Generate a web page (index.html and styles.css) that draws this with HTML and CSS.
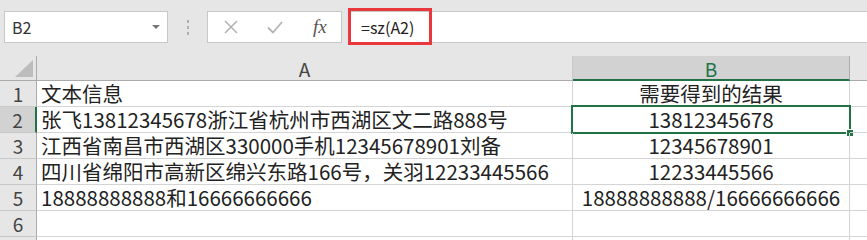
FILE: index.html
```html
<!DOCTYPE html>
<html lang="zh-CN">
<head>
<meta charset="utf-8">
<title>Excel</title>
<link rel="stylesheet" href="styles.css">
</head>
<body>
<div class="app">
  <div class="toolbar">
    <div class="namebox">
      <span class="name">B2</span>
      <span class="caret"></span>
    </div>
    <div class="grip"><i></i><i></i><i></i></div>
    <div class="fnbox">
      <svg class="ico" width="16" height="16" viewBox="0 0 16 16"><path d="M2 2 L14 14 M14 2 L2 14" stroke="#b4b4b4" stroke-width="1.6" fill="none"/></svg>
      <svg class="ico" width="18" height="16" viewBox="0 0 18 16"><path d="M2 8.5 L7 13.5 L16 3" stroke="#b4b4b4" stroke-width="1.8" fill="none"/></svg>
      <span class="fx">fx</span>
    </div>
    <div class="formula">
      <span class="ftext">=sz(A2)</span>
      <span class="mark"></span>
    </div>
  </div>
  <div class="sheet">
    <div class="corner"><span class="tri"></span></div>
    <div class="colh">A</div>
    <div class="colh sel">B</div>
    <div class="colh last"></div>

    <div class="rowh">1</div>
    <div class="cell">文本信息</div>
    <div class="cell c">需要得到的结果</div>
    <div class="cell last"></div>

    <div class="rowh sel">2</div>
    <div class="cell">张飞13812345678浙江省杭州市西湖区文二路888号</div>
    <div class="cell c active">13812345678<span class="selbox"><span class="handle"></span></span></div>
    <div class="cell last"></div>

    <div class="rowh">3</div>
    <div class="cell">江西省南昌市西湖区330000手机12345678901刘备</div>
    <div class="cell c">12345678901</div>
    <div class="cell last"></div>

    <div class="rowh">4</div>
    <div class="cell">四川省绵阳市高新区绵兴东路166号，关羽12233445566</div>
    <div class="cell c">12233445566</div>
    <div class="cell last"></div>

    <div class="rowh">5</div>
    <div class="cell">18888888888和16666666666</div>
    <div class="cell c">18888888888/16666666666</div>
    <div class="cell last"></div>

    <div class="rowh">6</div>
    <div class="cell"></div>
    <div class="cell c"></div>
    <div class="cell last"></div>

    <div class="rowh"></div>
    <div class="cell"></div>
    <div class="cell c"></div>
    <div class="cell last"></div>
  </div>
</div>
</body>
</html>
```

FILE: styles.css
```css
html, body {
  margin: 0;
  padding: 0;
  width: 867px;
  height: 240px;
  overflow: hidden;
  background: #e6e6e6;
}
.app {
  font-family: "Noto Sans CJK SC", "Noto Sans", sans-serif;
  color: #222;
}
.toolbar {
  height: 56px;
  box-sizing: border-box;
  padding: 11px 0 0 4px;
  display: flex;
  align-items: flex-start;
}
.namebox {
  width: 164px;
  height: 32px;
  box-sizing: border-box;
  background: #fff;
  border: 1px solid #c8c8c8;
  display: flex;
  align-items: center;
  padding-left: 7px;
  padding-right: 7px;
}
.name {
  font-size: 16px;
  color: #333;
  flex: 1;
}
.caret {
  width: 0;
  height: 0;
  border-left: 4px solid transparent;
  border-right: 4px solid transparent;
  border-top: 4px solid #777;
}
.grip {
  width: 39px;
  height: 32px;
  display: flex;
  flex-direction: column;
  align-items: center;
  justify-content: center;
  gap: 3px;
}
.grip i {
  display: block;
  width: 2px;
  height: 3px;
  background: #b0b0b0;
}
.fnbox {
  width: 135px;
  height: 32px;
  box-sizing: border-box;
  background: #fff;
  border: 1px solid #c8c8c8;
  display: flex;
  align-items: center;
  padding-left: 15px;
  gap: 27px;
}
.fx {
  font-family: "Liberation Serif", "DejaVu Serif", serif;
  font-style: italic;
  font-size: 19px;
  color: #555;
  margin-left: 2px;
}
.formula {
  margin-left: 6px;
  flex: 1;
  height: 32px;
  box-sizing: border-box;
  background: #fff;
  border-top: 1px solid #c8c8c8;
  border-bottom: 1px solid #c8c8c8;
  display: flex;
  align-items: center;
  padding-left: 13px;
  position: relative;
}
.ftext {
  font-size: 16px;
  color: #222;
}
.mark {
  position: absolute;
  left: 0;
  top: -4px;
  width: 84px;
  height: 37px;
  box-sizing: border-box;
  border: 3px solid #e8383d;
}
.sheet {
  display: grid;
  grid-template-columns: 37px 536px 277px 1fr;
  grid-template-rows: 25px repeat(7, 26px);
  background: #fff;
}
.corner {
  background: #e6e6e6;
  border-right: 1px solid #ababab;
  border-bottom: 1px solid #ababab;
  box-sizing: border-box;
  position: relative;
}
.tri {
  position: absolute;
  right: 3px;
  bottom: 3px;
  width: 0;
  height: 0;
  border-left: 18px solid transparent;
  border-bottom: 17px solid #bdbdbd;
}
.colh {
  background: #e6e6e6;
  border-right: 1px solid #c8c8c8;
  border-bottom: 1px solid #ababab;
  box-sizing: border-box;
  display: flex;
  align-items: center;
  justify-content: center;
  font-size: 19px;
  color: #444;
  padding-top: 1px;
}
.colh.sel {
  background: #d2d2d2;
  color: #217346;
  border-bottom: 2px solid #217346;
  border-right: 1px solid #ababab;
}
.colh.last {
  border-right: none;
}
.rowh {
  background: #e6e6e6;
  border-right: 1px solid #ababab;
  border-bottom: 1px solid #c8c8c8;
  box-sizing: border-box;
  display: flex;
  align-items: center;
  justify-content: center;
  font-size: 19px;
  color: #444;
}
.rowh.sel {
  background: #d2d2d2;
  border-right: 2px solid #217346;
}
.cell {
  border-right: 1px solid #d4d4d4;
  border-bottom: 1px solid #d4d4d4;
  box-sizing: border-box;
  font-size: 20.5px;
  line-height: 25px;
  color: #222;
  padding-left: 4px;
  white-space: nowrap;
  overflow: visible;
  position: relative;
}
.cell.c {
  text-align: center;
  padding-left: 0;
}
.cell.last {
  border-right: none;
}
.selbox {
  position: absolute;
  left: -2px;
  top: -2px;
  right: -2px;
  bottom: -2px;
  border: 2px solid #217346;
}
.handle {
  position: absolute;
  right: -5px;
  bottom: -5px;
  width: 6px;
  height: 6px;
  background: #217346;
  border: 1px solid #fff;
}
```
